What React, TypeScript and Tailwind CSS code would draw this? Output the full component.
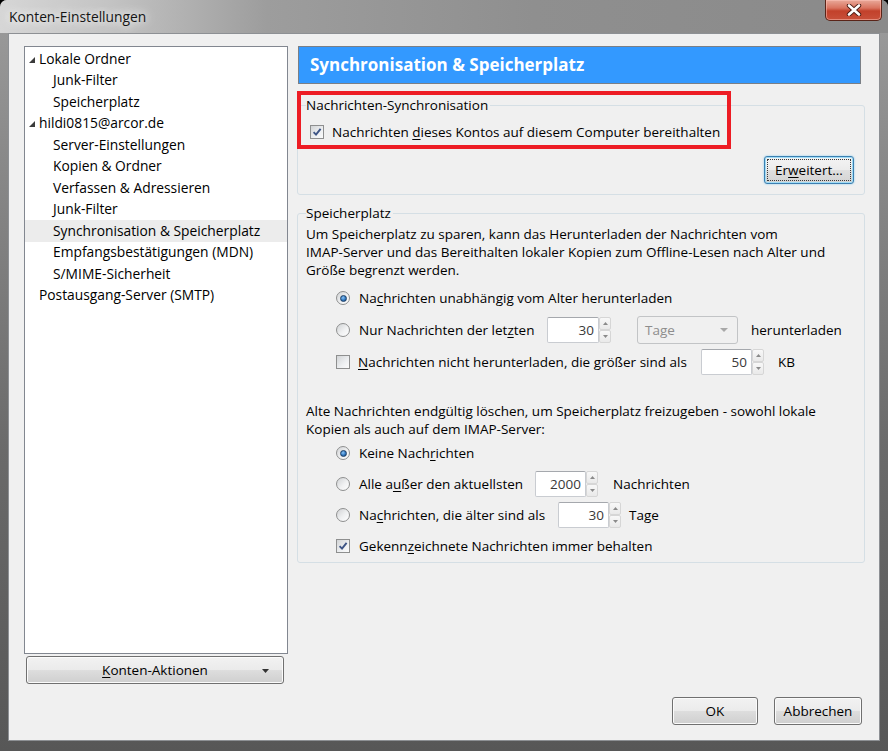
import type { ReactNode } from "react";

const ui = "font-['Open_Sans',sans-serif]";

function U({ children }: { children: ReactNode }) {
  return <span className="underline decoration-1 underline-offset-[2px]">{children}</span>;
}

function Check({ checked }: { checked?: boolean }) {
  return (
    <span className="flex h-[14px] w-[14px] shrink-0 items-center justify-center border border-[#8e8f8f] bg-white">
      <span className="flex h-[12px] w-[12px] items-center justify-center bg-[linear-gradient(135deg,#d2d4d6_0%,#eef0f2_60%,#fbfbfb_100%)]">
        {checked && (
          <svg width="10" height="10" viewBox="0 0 10 10">
            <path d="M1.6 5.2 L4 7.6 L8.6 1.8" fill="none" stroke="#3d5485" strokeWidth="1.9" />
          </svg>
        )}
      </span>
    </span>
  );
}

function Radio({ checked }: { checked?: boolean }) {
  return (
    <span className="flex h-[14px] w-[14px] shrink-0 items-center justify-center rounded-full border border-[#8e8f8f] bg-[linear-gradient(135deg,#d0d2d4_0%,#f0f1f2_55%,#ffffff_100%)]">
      {checked && (
        <span className="h-[7px] w-[7px] rounded-full border border-[#1c3f66] bg-[radial-gradient(circle_at_40%_35%,#8cc4f5_0%,#2f77c0_55%,#153e6e_100%)]" />
      )}
    </span>
  );
}

function SpinArrow({ up }: { up?: boolean }) {
  return (
    <div className="flex h-1/2 items-center justify-center rounded-[2px] border border-[#d6d6d6] bg-[linear-gradient(180deg,#f8f8f8,#e9e9e9)]">
      <svg width="5" height="3" viewBox="0 0 5 3">
        <polygon points={up ? "2.5,0 5,3 0,3" : "0,0 5,0 2.5,3"} fill="#8a8a8a" />
      </svg>
    </div>
  );
}

function Spin({ value, width }: { value: string; width: string }) {
  return (
    <div className="flex h-[26px] shrink-0">
      <div className={`${width} flex items-center justify-end rounded-[2px] border border-[#c9ccd1] border-t-[#a5a8ad] bg-white pr-[4px] text-[#3a3a3a]`}>
        {value}
      </div>
      <div className="flex w-[12px] flex-col">
        <SpinArrow up />
        <SpinArrow />
      </div>
    </div>
  );
}

function Button({ children, className }: { children: ReactNode; className: string }) {
  return (
    <div
      className={`flex h-[28px] items-center justify-center rounded-[3px] border border-[#707070] bg-[linear-gradient(180deg,#f2f2f2_0%,#ebebeb_48%,#dddddd_52%,#cfcfcf_100%)] shadow-[inset_0_0_0_1px_#fbfbfb] ${className}`}
    >
      {children}
    </div>
  );
}

function Row({ children }: { children: ReactNode }) {
  return <div className="flex h-[26px] items-center pl-[30px]">{children}</div>;
}

type TreeItem = { label: string; level: 0 | 1; open?: boolean; selected?: boolean };

const tree: TreeItem[] = [
  { label: "Lokale Ordner", level: 0, open: true },
  { label: "Junk-Filter", level: 1 },
  { label: "Speicherplatz", level: 1 },
  { label: "hildi0815@arcor.de", level: 0, open: true },
  { label: "Server-Einstellungen", level: 1 },
  { label: "Kopien & Ordner", level: 1 },
  { label: "Verfassen & Adressieren", level: 1 },
  { label: "Junk-Filter", level: 1 },
  { label: "Synchronisation & Speicherplatz", level: 1, selected: true },
  { label: "Empfangsbestätigungen (MDN)", level: 1 },
  { label: "S/MIME-Sicherheit", level: 1 },
  { label: "Postausgang-Server (SMTP)", level: 0 },
];

export default function App() {
  return (
    <div className={`h-[751px] w-[888px] bg-black text-[13.5px] leading-[18px] text-black ${ui}`}>
      <div className="flex h-full flex-col rounded-t-[7px] bg-[linear-gradient(180deg,#9c9c9c_0%,#8a8a8a_20%,#6a6a6a_60%,#575757_100%)] px-[8px] pb-[10px]">
        {/* title bar */}
        <div className="-mx-[8px] flex h-[33px] shrink-0 items-start rounded-t-[7px] bg-[linear-gradient(90deg,#d6d6d6_0%,#c4c4c4_12%,#9d9d9d_30%,#8f8f8f_60%,#8a8a8a_100%)] pl-[9px] pr-[6px]">
          <div className="mt-[8px] text-[13.8px] text-[#151515] [text-shadow:0_0_8px_#ffffff,0_0_14px_#f2f2f2]">
            Konten-Einstellungen
          </div>
          <div className="ml-auto flex h-[21px] w-[57px] items-center justify-center rounded-b-[5px] border border-t-0 border-[#5a2418] bg-[linear-gradient(180deg,#e9a99a_0%,#d9735f_40%,#c2412b_55%,#c8503a_100%)] shadow-[inset_0_0_0_1px_rgba(255,200,190,0.5)]">
            <svg width="16" height="12" viewBox="0 0 16 12">
              <path d="M3 1.5 L13 10.5 M13 1.5 L3 10.5" stroke="#4a1a12" strokeWidth="4.4" strokeLinecap="round" />
              <path d="M3 1.5 L13 10.5 M13 1.5 L3 10.5" stroke="#ffffff" strokeWidth="2.6" strokeLinecap="round" />
            </svg>
          </div>
        </div>

        {/* client area */}
        <div className="flex flex-1 gap-[9px] border border-[#8d9094] bg-[#f0f0f0] pl-[15px] pt-[12px]">
          {/* account tree */}
          <div className="flex w-[264px] shrink-0 flex-col">
            <div className="h-[608px] border border-[#828790] bg-white pt-[1px] text-[13.8px]">
              {tree.map((item, i) => (
                <div
                  key={i}
                  className={`flex h-[21.5px] items-center ${item.selected ? "bg-[#ececec]" : ""} ${
                    item.level === 1 ? "pl-[28px]" : item.open ? "pl-[4px]" : "pl-[14px]"
                  }`}
                >
                  {item.open && (
                    <svg width="6" height="6" viewBox="0 0 6 6" className="mr-[4px] mt-[2px]">
                      <polygon points="6,0 6,6 0,6" fill="#3b3b3b" />
                    </svg>
                  )}
                  {item.label}
                </div>
              ))}
            </div>
            <Button className="relative ml-[2px] mt-[2px] w-[258px]">
              <span>
                <U>K</U>onten-Aktionen
              </span>
              <svg width="7" height="4" viewBox="0 0 7 4" className="absolute right-[14px] top-[12px]">
                <polygon points="0,0 7,0 3.5,4" fill="#333" />
              </svg>
            </Button>
          </div>

          {/* settings pane */}
          <div className="flex h-[679px] w-[568px] flex-col">
            <div className="ml-[1px] flex h-[38px] w-[563px] items-center border border-[#7a7f86] bg-[#3399ff] pl-[11px] text-[17px] font-bold text-white">
              Synchronisation &amp; Speicherplatz
            </div>

            <div className="relative">
              <fieldset className="mt-[12px] flex flex-col rounded-[3px] border border-[#d5dfe5] px-[8px] pb-[10px]">
                <legend className="pr-[2px]">Nachrichten-Synchronisation</legend>
                <div className="ml-[4px] mt-[9px] flex h-[18px] items-center gap-[8px]">
                  <Check checked />
                  <span>
                    Nachrichten <U>d</U>ieses Kontos auf diesem Computer bereithalten
                  </span>
                </div>
                <div className="mt-[15px] flex justify-end pr-[2px]">
                  <div className="flex h-[28px] w-[90px] rounded-[3px] border border-[#3c7fb1] bg-[linear-gradient(180deg,#f4f4f4_0%,#ececec_48%,#dfdfdf_52%,#d3d3d3_100%)] p-[2px] shadow-[inset_0_0_0_1px_#9fdcf6,0_0_2px_#7cc8ef]">
                    <div className="flex flex-1 items-center justify-center border border-dotted border-[#3a3a3a]">
                      Er<U>w</U>eitert...
                    </div>
                  </div>
                </div>
              </fieldset>
              {/* red highlight frame */}
              <div className="pointer-events-none absolute left-[0px] top-[7px] h-[58px] w-[434px] border-[4px] border-[#ed1c24]" />
            </div>

            <fieldset className="mt-[9px] flex flex-col rounded-[3px] border border-[#d5dfe5] px-[8px] pb-[3px]">
              <legend className="pr-[2px]">Speicherplatz</legend>
              <p className="mt-[3px]">
                Um Speicherplatz zu sparen, kann das Herunterladen der Nachrichten vom
                <br />
                IMAP-Server und das Bereithalten lokaler Kopien zum Offline-Lesen nach Alter und
                <br />
                Größe begrenzt werden.
              </p>
              <div className="mt-[6px] flex flex-col gap-[6px]">
                <Row>
                  <Radio checked />
                  <span className="ml-[9px]">
                    Na<U>c</U>hrichten unabhängig vom Alter herunterladen
                  </span>
                </Row>
                <Row>
                  <Radio />
                  <span className="ml-[9px] w-[188px] shrink-0">
                    Nur Nachrichten der let<U>z</U>ten
                  </span>
                  <Spin value="30" width="w-[52px]" />
                  <div className="ml-[26px] flex h-[28px] w-[101px] items-center justify-between rounded-[3px] border border-[#c2c4c6] pl-[7px] pr-[9px] text-[#8d8d8d]">
                    Tage
                    <svg width="8" height="4" viewBox="0 0 8 4">
                      <polygon points="0,0 8,0 4,4" fill="#a8a8a8" />
                    </svg>
                  </div>
                  <span className="ml-[13px]">herunterladen</span>
                </Row>
                <Row>
                  <Check />
                  <span className="ml-[8px] w-[343px] shrink-0">
                    <U>N</U>achrichten nicht herunterladen, die größer sind als
                  </span>
                  <Spin value="50" width="w-[51px]" />
                  <span className="ml-[14px]">KB</span>
                </Row>
              </div>

              <p className="mt-[27px]">
                Alte Nachrichten endgültig löschen, um Speicherplatz freizugeben - sowohl lokale
                <br />
                Kopien als auch auf dem IMAP-Server:
              </p>
              <div className="mt-[2px] flex flex-col gap-[5px]">
                <Row>
                  <Radio checked />
                  <span className="ml-[9px]">
                    Keine Nach<U>r</U>ichten
                  </span>
                </Row>
                <Row>
                  <Radio />
                  <span className="ml-[9px] w-[176px] shrink-0">
                    Alle a<U>u</U>ßer den aktuellsten
                  </span>
                  <Spin value="2000" width="w-[51px]" />
                  <span className="ml-[15px]">Nachrichten</span>
                </Row>
                <Row>
                  <Radio />
                  <span className="ml-[9px] w-[199px] shrink-0">
                    Na<U>c</U>hrichten, die älter sind als
                  </span>
                  <Spin value="30" width="w-[51px]" />
                  <span className="ml-[8px]">Tage</span>
                </Row>
                <Row>
                  <Check checked />
                  <span className="ml-[9px]">
                    Gekenn<U>z</U>eichnete Nachrichten immer behalten
                  </span>
                </Row>
              </div>
            </fieldset>

            <div className="mt-auto flex justify-end gap-[16px] pr-[3px]">
              <Button className="w-[86px]">OK</Button>
              <Button className="w-[88px]">Abbrechen</Button>
            </div>
          </div>
        </div>
      </div>
    </div>
  );
}
